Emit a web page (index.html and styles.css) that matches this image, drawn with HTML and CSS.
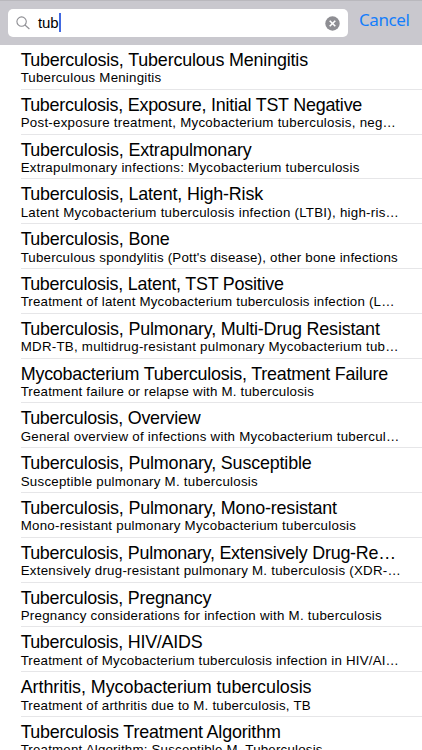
FILE: index.html
```
<!DOCTYPE html>
<html lang="en">
<head>
  <meta charset="UTF-8" />
  <meta name="viewport" content="width=device-width, initial-scale=1.0" />
  <title>Search</title>
  <link rel="stylesheet" href="styles.css">
</head>
<body>
  <header class="search-bar">
    <div class="search-field">
      <svg class="search-icon" viewBox="0 0 14 14" width="14" height="14">
        <circle cx="5.6" cy="5.6" r="4.7" />
        <path d="M9 9L13.4 13" />
      </svg>
      <span class="query">tub</span>
      <span class="caret"></span>
      <svg class="clear-icon" viewBox="0 0 15 15" width="15" height="15">
        <circle cx="7.5" cy="7.5" r="7.2" />
        <path d="M4.7 4.7L10.3 10.3M10.3 4.7L4.7 10.3" />
      </svg>
    </div>
    <a class="cancel">Cancel</a>
  </header>

  <ul class="results">
    <li><h2>Tuberculosis, Tuberculous Meningitis</h2><p class="kern">Tuberculous Meningitis</p></li>
    <li><h2 class="tight">Tuberculosis, Exposure, Initial TST Negative</h2><p>Post-exposure treatment, Mycobacterium tuberculosis, neg…</p></li>
    <li><h2>Tuberculosis, Extrapulmonary</h2><p>Extrapulmonary infections: Mycobacterium tuberculosis</p></li>
    <li><h2>Tuberculosis, Latent, High-Risk</h2><p>Latent Mycobacterium tuberculosis infection (LTBI), high-ris…</p></li>
    <li><h2>Tuberculosis, Bone</h2><p class="kern">Tuberculous spondylitis (Pott's disease), other bone infections</p></li>
    <li><h2 class="tight">Tuberculosis, Latent, TST Positive</h2><p class="kern">Treatment of latent Mycobacterium tuberculosis infection (L…</p></li>
    <li><h2>Tuberculosis, Pulmonary, Multi-Drug Resistant</h2><p>MDR-TB, multidrug-resistant pulmonary Mycobacterium tub…</p></li>
    <li><h2 class="even">Mycobacterium Tuberculosis, Treatment Failure</h2><p class="kern">Treatment failure or relapse with M. tuberculosis</p></li>
    <li><h2 class="tight">Tuberculosis, Overview</h2><p>General overview of infections with Mycobacterium tubercul…</p></li>
    <li><h2>Tuberculosis, Pulmonary, Susceptible</h2><p>Susceptible pulmonary M. tuberculosis</p></li>
    <li><h2>Tuberculosis, Pulmonary, Mono-resistant</h2><p>Mono-resistant pulmonary Mycobacterium tuberculosis</p></li>
    <li><h2 class="tight">Tuberculosis, Pulmonary, Extensively Drug-Re…</h2><p>Extensively drug-resistant pulmonary M. tuberculosis (XDR-…</p></li>
    <li><h2 class="tight">Tuberculosis, Pregnancy</h2><p>Pregnancy considerations for infection with M. tuberculosis</p></li>
    <li><h2 class="tight">Tuberculosis, HIV/AIDS</h2><p class="kern">Treatment of Mycobacterium tuberculosis infection in HIV/AI…</p></li>
    <li><h2 class="loose">Arthritis, Mycobacterium tuberculosis</h2><p class="kern">Treatment of arthritis due to M. tuberculosis, TB</p></li>
    <li><h2>Tuberculosis Treatment Algorithm</h2><p class="kern">Treatment Algorithm: Susceptible M. Tuberculosis</p></li>
  </ul>
</body>
</html>
```
FILE: styles.css
```
body {
  margin: 0;
  height: 750px;
  overflow: hidden;
  background: #fff;
  color: #000;
  font-family: 'Liberation Sans', Arial, sans-serif;
}
.search-bar {
  display: flex;
  box-sizing: border-box;
  height: 45px;
  padding: 8px 0 0 8px;
  background: #c9c8ce;
  border-top: 1px solid #b9b8bd;
}
.search-field {
  display: flex;
  align-items: center;
  box-sizing: border-box;
  width: 339.5px;
  height: 28px;
  padding: 0 8px;
  background: #fff;
  border-radius: 5px;
}
.search-icon {
  fill: none;
  stroke: #8e8e93;
  stroke-width: 1.1;
}
.query {
  margin-left: 8px;
  font-size: 15px;
  letter-spacing: -0.1px;
  line-height: 28px;
}
.caret {
  width: 2px;
  height: 19px;
  margin-top: -2px;
  background: #4169e1;
}
.clear-icon {
  margin-left: auto;
  fill: #8e8e93;
}
.clear-icon path {
  stroke: #fff;
  stroke-width: 1.6;
}
.cancel {
  margin-left: 11.5px;
  color: #147efb;
  font-family: 'Noto Sans', sans-serif;
  font-size: 17px;
  letter-spacing: -0.4px;
  line-height: 21px;
}
.results {
  margin: 0;
  padding: 0 0 0 20.7px;
  list-style: none;
}
.results li {
  box-sizing: border-box;
  height: 44.8px;
  padding-top: 5px;
  border-bottom: 1px solid #e6e6e8;
  white-space: nowrap;
}
.results h2 {
  margin: 0;
  font-size: 17.9px;
  font-weight: 400;
  letter-spacing: -0.16px;
  line-height: 21px;
}
.results h2::first-letter {
  letter-spacing: -1.5px;
}
.results h2.tight {
  letter-spacing: -0.22px;
}
.results h2.even,
.results h2.even::first-letter {
  letter-spacing: -0.21px;
}
.results h2.loose,
.results h2.loose::first-letter {
  letter-spacing: -0.04px;
}
.results p {
  margin: -0.6px 0 0;
  font-size: 13.3px;
  letter-spacing: 0.26px;
  line-height: 15px;
}
.results p.kern {
  letter-spacing: 0.21px;
}
.results p.kern::first-letter {
  letter-spacing: -0.5px;
}
```
